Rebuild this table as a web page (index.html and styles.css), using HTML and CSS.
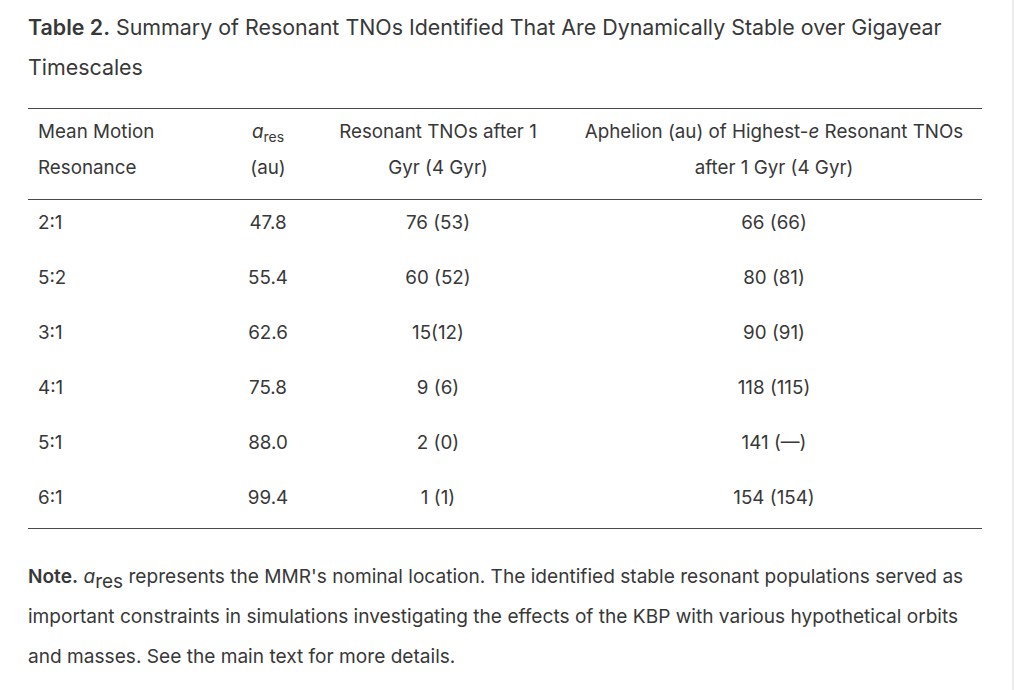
FILE: index.html
```html
<!DOCTYPE html>
<html lang="en">
<head>
<meta charset="utf-8">
<title>Table 2</title>
<link rel="stylesheet" href="styles.css">
</head>
<body>
<div class="page">
  <main class="content">
    <p class="caption"><b>Table 2.</b> Summary of Resonant TNOs Identified That Are Dynamically Stable over Gigayear Timescales</p>
    <table class="data">
      <colgroup>
        <col class="c1"><col class="c2"><col class="c3"><col class="c4">
      </colgroup>
      <thead>
        <tr>
          <th class="left">Mean Motion Resonance</th>
          <th><i>a</i><sub>res</sub><br>(au)</th>
          <th class="narrow">Resonant TNOs after 1 Gyr (4 Gyr)</th>
          <th>Aphelion (au) of Highest-<i>e</i> Resonant TNOs after 1 Gyr (4 Gyr)</th>
        </tr>
      </thead>
      <tbody>
        <tr><td class="left">2:1</td><td>47.8</td><td>76 (53)</td><td>66 (66)</td></tr>
        <tr><td class="left">5:2</td><td>55.4</td><td>60 (52)</td><td>80 (81)</td></tr>
        <tr><td class="left">3:1</td><td>62.6</td><td>15(12)</td><td>90 (91)</td></tr>
        <tr><td class="left">4:1</td><td>75.8</td><td>9 (6)</td><td>118 (115)</td></tr>
        <tr><td class="left">5:1</td><td>88.0</td><td>2 (0)</td><td>141 (—)</td></tr>
        <tr><td class="left">6:1</td><td>99.4</td><td>1 (1)</td><td>154 (154)</td></tr>
      </tbody>
    </table>
    <p class="note"><b>Note.</b> <i>a</i><sub>res</sub> represents the MMR's nominal location. The identified stable resonant populations served as important constraints in simulations investigating the effects of the KBP with various hypothetical orbits and masses. See the main text for more details.</p>
  </main>
  <div class="edge"></div>
</div>
</body>
</html>
```

FILE: styles.css
```css
html, body {
  margin: 0;
  padding: 0;
  background: #ffffff;
}
body {
  font-family: Inter, "Noto Sans", "Liberation Sans", sans-serif;
  color: #383838;
}
.page {
  display: flex;
  width: 1024px;
  height: 690px;
  overflow: hidden;
}
.content {
  width: 954px;
  padding: 7px 0 0 28px;
}
.edge {
  margin-left: 30px;
  width: 2px;
  background: #ececec;
}
.caption {
  margin: 0;
  font-size: 21.4px;
  line-height: 40px;
}
.caption b {
  font-weight: 600;
}
.data {
  margin-top: 21px;
  width: 954px;
  border-collapse: collapse;
  table-layout: fixed;
  font-size: 18.8px;
}
.c1 { width: 198px; }
.c2 { width: 84px; }
.c3 { width: 256px; }
.c4 { width: 416px; }
.data thead tr {
  border-top: 1px solid #4a4a4a;
  border-bottom: 1px solid #4a4a4a;
}
.data th {
  font-weight: 400;
  line-height: 36px;
  padding: 5px 10px 13px;
  text-align: center;
  vertical-align: top;
}
.data th.narrow {
  padding-left: 20px;
  padding-right: 20px;
}
.data sub {
  font-size: 14px;
  vertical-align: -4px;
  line-height: 0;
}
.data td {
  padding: 11px 10px 20px;
  text-align: center;
  vertical-align: top;
  line-height: 24px;
}
.data tbody tr:last-child td {
  padding-bottom: 18px;
}
.data tbody tr:last-child {
  border-bottom: 1px solid #4a4a4a;
}
.data .left { text-align: left; }
.note {
  margin: 27px 0 0;
  font-size: 19.1px;
  line-height: 40px;
}
.note b { font-weight: 600; }
.note sub {
  font-size: 19px;
  vertical-align: -5px;
  line-height: 0;
}
```
